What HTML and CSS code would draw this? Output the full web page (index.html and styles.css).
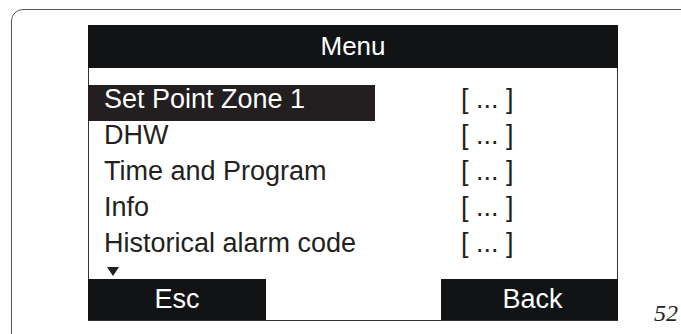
FILE: index.html
```html
<!DOCTYPE html>
<html lang="en">

<head>
    <meta charset="UTF-8">
    <meta name="viewport" content="width=device-width, initial-scale=1.0">
    <title>Menu</title>
    <link rel="stylesheet" href="styles.css">
</head>

<body>
    <div class="frame">
        <div class="panel">
            <div class="screen">
                <div class="screen-title">Menu</div>
                <ul class="menu-list">
                    <li class="menu-row active">
                        <span class="menu-label">Set Point Zone 1</span>
                        <span class="menu-value">[ ... ]</span>
                    </li>
                    <li class="menu-row">
                        <span class="menu-label">DHW</span>
                        <span class="menu-value">[ ... ]</span>
                    </li>
                    <li class="menu-row">
                        <span class="menu-label">Time and Program</span>
                        <span class="menu-value">[ ... ]</span>
                    </li>
                    <li class="menu-row">
                        <span class="menu-label">Info</span>
                        <span class="menu-value">[ ... ]</span>
                    </li>
                    <li class="menu-row">
                        <span class="menu-label">Historical alarm code</span>
                        <span class="menu-value">[ ... ]</span>
                    </li>
                </ul>
                <div class="more">
                    <svg width="12" height="9" viewBox="0 0 12 9">
                        <polygon points="0,0 12,0 6,9" fill="#231f20" />
                    </svg>
                </div>
                <div class="softkeys">
                    <div class="softkey esc">Esc</div>
                    <div class="softkey back">Back</div>
                </div>
            </div>
            <div class="page-no">52</div>
        </div>
    </div>
</body>

</html>
```

FILE: styles.css
```css
html,
body {
    margin: 0;
    height: 100%;
    overflow: hidden;
    background: #ffffff;
}

body {
    font-family: "Liberation Sans", Arial, sans-serif;
    color: #231f20;
}

/* 外框，右边和下边超出窗口 */
.frame {
    margin: 9px 0 0 11px;
    width: 720px;
    height: 340px;
    box-sizing: border-box;
    border: 1px solid #555555;
    border-radius: 12px;
    padding: 15px 0 0 76px;
}

.panel {
    display: flex;
    align-items: flex-end;
}

/* 显示屏 */
.screen {
    width: 530px;
    height: 296px;
    box-sizing: border-box;
    border: 1px solid #333333;
    border-top: none;
    display: flex;
    flex-direction: column;
}

.screen-title {
    margin: 0 -1px;
    height: 43px;
    line-height: 43px;
    background: #111314;
    color: #ffffff;
    font-size: 26px;
    text-align: center;
}

.menu-list {
    list-style: none;
    margin: 17px 0 0 0;
    padding: 0;
}

.menu-row {
    display: flex;
    height: 36px;
    font-size: 27px;
    line-height: 28px;
}

.menu-label {
    width: 286px;
    box-sizing: border-box;
    padding-left: 15px;
    height: 36px;
    white-space: nowrap;
}

.menu-row.active .menu-label {
    margin-left: -1px;
    padding-left: 16px;
    width: 287px;
    background: #231f20;
    color: #ffffff;
}

.menu-value {
    margin-left: 86px;
    white-space: nowrap;
}

.more {
    height: 14px;
    padding: 2px 0 0 18px;
    box-sizing: border-box;
}

.more svg {
    display: block;
}

.softkeys {
    display: flex;
    justify-content: space-between;
    margin: 0 -1px;
    height: 41px;
}

.softkey {
    background: #111314;
    color: #ffffff;
    font-size: 27px;
    line-height: 41px;
    text-align: center;
}

.esc {
    width: 178px;
}

.back {
    width: 177px;
    box-sizing: border-box;
    padding-left: 6px;
}

/* 页码 */
.page-no {
    margin: 0 0 -4px 36px;
    font-family: "Liberation Serif", "Times New Roman", serif;
    font-style: italic;
    font-size: 24px;
    line-height: 24px;
}
```
